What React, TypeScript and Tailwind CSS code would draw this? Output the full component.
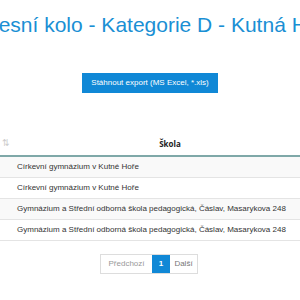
import React from "react";

const rows = [
    "Církevní gymnázium v Kutné Hoře",
    "Církevní gymnázium v Kutné Hoře",
    "Gymnázium a Střední odborná škola pedagogická, Čáslav, Masarykova 248",
    "Gymnázium a Střední odborná škola pedagogická, Čáslav, Masarykova 248",
];

export default function App() {
    return (
        <div className="w-[300px] h-[300px] overflow-hidden bg-white font-['Liberation_Sans',Arial,sans-serif]">
            <div className="flex justify-center pt-[12px] pl-[2px]">
                <h1 className="whitespace-nowrap text-[21px] leading-[26px] text-[#1a8fd4]">
                    Okresní kolo - Kategorie D - Kutná Hora
                </h1>
            </div>

            <div className="flex justify-center pt-[35px]">
                <button className="h-[20px] px-[9px] bg-[#1088d6] text-white text-[8px] leading-[20px]">
                    Stáhnout export (MS Excel, *.xls)
                </button>
            </div>

            <table className="mt-[40px] w-[328px] border-collapse text-[8px] text-[#333]">
                <thead>
                    <tr className="h-[23px] border-b-2 border-[#7fa8a8]">
                        <th className="w-[12px] text-left pl-[2px] text-[#ccc] font-normal text-[9px]">⇅</th>
                        <th className="font-bold text-center text-[#222] font-['Open_Sans',sans-serif]">Škola</th>
                    </tr>
                </thead>
                <tbody>
                    {rows.map((name, i) => (
                        <tr key={i} className={`h-[21px] border-b border-[#e4e4e4] ${i % 2 === 0 ? "bg-[#f9f9f9]" : "bg-white"}`}>
                            <td></td>
                            <td className="pl-[5px] whitespace-nowrap">{name}</td>
                        </tr>
                    ))}
                </tbody>
            </table>

            <div className="flex justify-center pt-[13px] pr-[2px] text-[8px]">
                <div className="flex h-[20px] border border-[#ddd]">
                    <span className="w-[51px] text-center leading-[18px] text-[#999]">Předchozí</span>
                    <span className="w-[18px] text-center leading-[18px] bg-[#1088d6] text-white font-bold">1</span>
                    <span className="w-[27px] text-center leading-[18px] text-[#777]">Další</span>
                </div>
            </div>
        </div>
    );
}
